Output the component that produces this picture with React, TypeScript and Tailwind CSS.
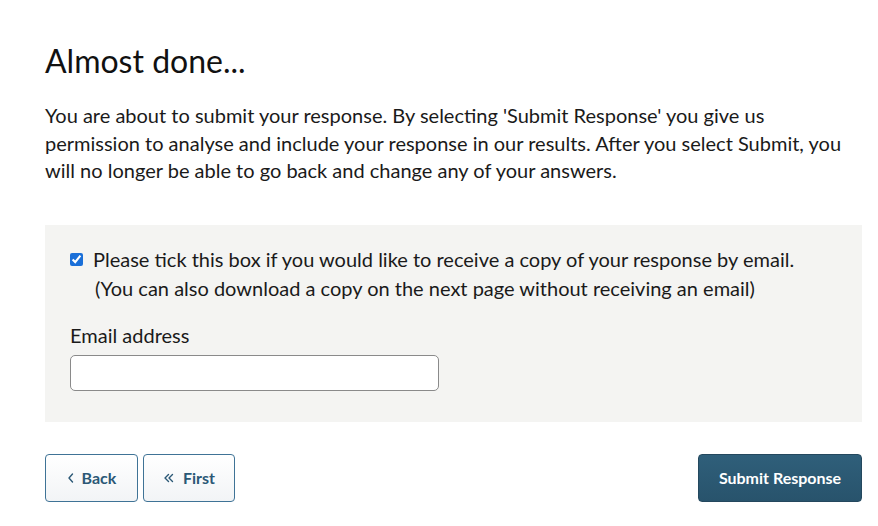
import React from "react";

function Chev() {
  return (
    <svg width="8" height="12" viewBox="0 0 8 12" fill="none" stroke="currentColor" strokeWidth="1.4" strokeLinecap="round" strokeLinejoin="round">
      <path d="M5.5 2 L2 6 L5.5 10" />
    </svg>
  );
}
function Chevs() {
  return (
    <svg width="12" height="12" viewBox="0 0 12 12" fill="none" stroke="currentColor" strokeWidth="1.4" strokeLinecap="round" strokeLinejoin="round">
      <path d="M5.5 2.5 L2 6 L5.5 9.5" />
      <path d="M9.5 2.5 L6 6 L9.5 9.5" />
    </svg>
  );
}

export default function App() {
  return (
    <div
      className="min-h-[526px] bg-white pl-[45px] pr-[16px] pt-[36px] text-[#1a1a1a]"
      style={{ fontFamily: "Lato, 'Open Sans', sans-serif" }}
    >
      <h1 className="text-[32px] leading-[50px] font-normal text-[#111]">Almost done...</h1>
      <p className="mt-[16px] text-[20px] leading-[27.5px] text-[#1a1a1a]">
        You are about to submit your response. By selecting 'Submit Response' you give us
        permission to analyse and include your response in our results. After you select Submit, you
        will no longer be able to go back and change any of your answers.
      </p>
      <div className="mt-[40px] bg-[#f4f4f2] px-[25px] pt-[20px] pb-[31px]">
        <label className="flex items-start gap-[10px] text-[20px] leading-[29px]">
          <input
            type="checkbox"
            defaultChecked
            className="mt-[8px] h-[13px] w-[13px] accent-[#1a6fd8]"
          />
          <span>
            Please tick this box if you would like to receive a copy of your response by email.
            <br />
            <span className="pl-[2px]">(You can also download a copy on the next page without receiving an email)</span>
          </span>
        </label>
        <div className="mt-[18px] text-[20px] leading-[28px]">Email address</div>
        <input
          type="text"
          className="mt-[6px] block h-[36px] w-[369px] rounded-[5px] border border-[#8a8a8a] bg-white"
        />
      </div>
      <div className="mt-[32px] flex items-center">
        <button className="flex h-[48px] w-[93px] items-center justify-center gap-[7px] rounded-[4px] border border-[#3f7396] bg-gradient-to-b from-white to-[#f2f4f6] text-[16px] font-bold text-[#2b5876]">
          <Chev />
          <span>Back</span>
        </button>
        <button className="ml-[5px] flex h-[48px] w-[92px] items-center justify-center gap-[8px] rounded-[4px] border border-[#3f7396] bg-gradient-to-b from-white to-[#f2f4f6] text-[16px] font-bold text-[#2b5876]">
          <Chevs />
          <span>First</span>
        </button>
        <button className="ml-auto h-[48px] w-[164px] rounded-[4px] border border-[#24485e] bg-gradient-to-b from-[#2f5f7a] to-[#28536c] text-[16px] font-bold text-white">
          Submit Response
        </button>
      </div>
    </div>
  );
}
